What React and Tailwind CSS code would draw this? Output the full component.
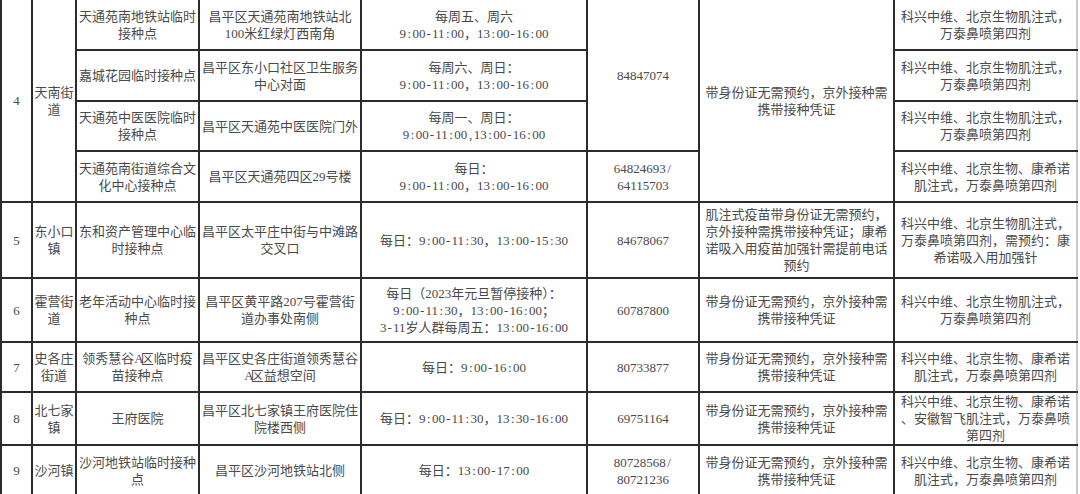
const colWidths = ["w-[31px]", "w-[44px]", "w-[123px]", "w-[162px]", "w-[226px]", "w-[112px]", "w-[195px]", "w-[183px]"];

const NOTE = ["带身份证无需预约，京外接种需", "携带接种凭证"];
const VAX = ["科兴中维、北京生物肌注式，", "万泰鼻喷第四剂"];
const VAX2 = ["科兴中维、北京生物、康希诺", "肌注式，万泰鼻喷第四剂"];

// half-width punctuation gets the same advance as a digit, like the original typeface
const fmt = (str) =>
  str.split("").map((ch, i) =>
    ":-/,A".includes(ch) ? (
      <span key={i} className="inline-block w-[6.5px] text-center">
        {ch}
      </span>
    ) : (
      ch
    )
  );

const Cell = ({ lines, rowSpan, last }) => (
  <td
    rowSpan={rowSpan}
    className={
      "border-2 border-[#2b2b2b] p-0 text-center align-middle whitespace-nowrap " +
      (last ? "border-r-[#c9c9c9]" : "")
    }
  >
    {lines.map((l, i) => (
      <div key={i}>{fmt(l)}</div>
    ))}
  </td>
);

export default function App() {
  return (
    <div className="w-[1080px] h-[494px] overflow-hidden bg-white">
      <table className="-mt-[2px] w-[1076px] table-fixed border-collapse text-[13px] leading-[17px] text-[#4a4a4a] font-['Liberation_Serif','Noto_Sans_CJK_SC',serif]">
        <colgroup>
          {colWidths.map((w, i) => (
            <col key={i} className={w} />
          ))}
        </colgroup>
        <tbody>
          {/* 4 天南街道 */}
          <tr className="h-[51px]">
            <Cell rowSpan={4} lines={["4"]} />
            <Cell rowSpan={4} lines={["天南街", "道"]} />
            <Cell lines={["天通苑南地铁站临时", "接种点"]} />
            <Cell lines={["昌平区天通苑南地铁站北", "100米红绿灯西南角"]} />
            <Cell lines={["每周五、周六", "9:00-11:00，13:00-16:00"]} />
            <Cell rowSpan={3} lines={["84847074"]} />
            <Cell rowSpan={4} lines={NOTE} />
            <Cell last lines={VAX} />
          </tr>
          <tr className="h-[51px]">
            <Cell lines={["嘉城花园临时接种点"]} />
            <Cell lines={["昌平区东小口社区卫生服务", "中心对面"]} />
            <Cell lines={["每周六、周日：", "9:00-11:00，13:00-16:00"]} />
            <Cell last lines={VAX} />
          </tr>
          <tr className="h-[50px]">
            <Cell lines={["天通苑中医医院临时", "接种点"]} />
            <Cell lines={["昌平区天通苑中医医院门外"]} />
            <Cell lines={["每周一、周日：", "9:00-11:00,13:00-16:00"]} />
            <Cell last lines={VAX} />
          </tr>
          <tr className="h-[51px]">
            <Cell lines={["天通苑南街道综合文", "化中心接种点"]} />
            <Cell lines={["昌平区天通苑四区29号楼"]} />
            <Cell lines={["每日：", "9:00-11:00，13:00-16:00"]} />
            <Cell lines={["64824693/", "64115703"]} />
            <Cell last lines={VAX2} />
          </tr>
          {/* 5 */}
          <tr className="h-[76px]">
            <Cell lines={["5"]} />
            <Cell lines={["东小口", "镇"]} />
            <Cell lines={["东和资产管理中心临", "时接种点"]} />
            <Cell lines={["昌平区太平庄中街与中滩路", "交叉口"]} />
            <Cell lines={["每日：9:00-11:30，13:00-15:30"]} />
            <Cell lines={["84678067"]} />
            <Cell
              lines={[
                "肌注式疫苗带身份证无需预约，",
                "京外接种需携带接种凭证；康希",
                "诺吸入用疫苗加强针需提前电话",
                "预约",
              ]}
            />
            <Cell last lines={["科兴中维、北京生物肌注式，", "万泰鼻喷第四剂，需预约：康", "希诺吸入用加强针"]} />
          </tr>
          {/* 6 */}
          <tr className="h-[64px]">
            <Cell lines={["6"]} />
            <Cell lines={["霍营街", "道"]} />
            <Cell lines={["老年活动中心临时接", "种点"]} />
            <Cell lines={["昌平区黄平路207号霍营街", "道办事处南侧"]} />
            <Cell
              lines={["每日（2023年元旦暂停接种）：", "9:00-11:30，13:00-16:00；", "3-11岁人群每周五：13:00-16:00"]}
            />
            <Cell lines={["60787800"]} />
            <Cell lines={NOTE} />
            <Cell last lines={VAX} />
          </tr>
          {/* 7 */}
          <tr className="h-[50px]">
            <Cell lines={["7"]} />
            <Cell lines={["史各庄", "街道"]} />
            <Cell lines={["领秀慧谷A区临时疫", "苗接种点"]} />
            <Cell lines={["昌平区史各庄街道领秀慧谷", "A区益想空间"]} />
            <Cell lines={["每日：9:00-16:00"]} />
            <Cell lines={["80733877"]} />
            <Cell lines={NOTE} />
            <Cell last lines={VAX2} />
          </tr>
          {/* 8 */}
          <tr className="h-[50px]">
            <Cell lines={["8"]} />
            <Cell lines={["北七家", "镇"]} />
            <Cell lines={["王府医院"]} />
            <Cell lines={["昌平区北七家镇王府医院住", "院楼西侧"]} />
            <Cell lines={["每日：9:00-11:30，13:30-16:00"]} />
            <Cell lines={["69751164"]} />
            <Cell lines={NOTE} />
            <Cell last lines={["科兴中维、北京生物、康希诺", "、安徽智飞肌注式，万泰鼻喷", "第四剂"]} />
          </tr>
          {/* 9 */}
          <tr className="h-[51px]">
            <Cell lines={["9"]} />
            <Cell lines={["沙河镇"]} />
            <Cell lines={["沙河地铁站临时接种", "点"]} />
            <Cell lines={["昌平区沙河地铁站北侧"]} />
            <Cell lines={["每日：13:00-17:00"]} />
            <Cell lines={["80728568/", "80721236"]} />
            <Cell lines={NOTE} />
            <Cell last lines={VAX2} />
          </tr>
        </tbody>
      </table>
    </div>
  );
}
